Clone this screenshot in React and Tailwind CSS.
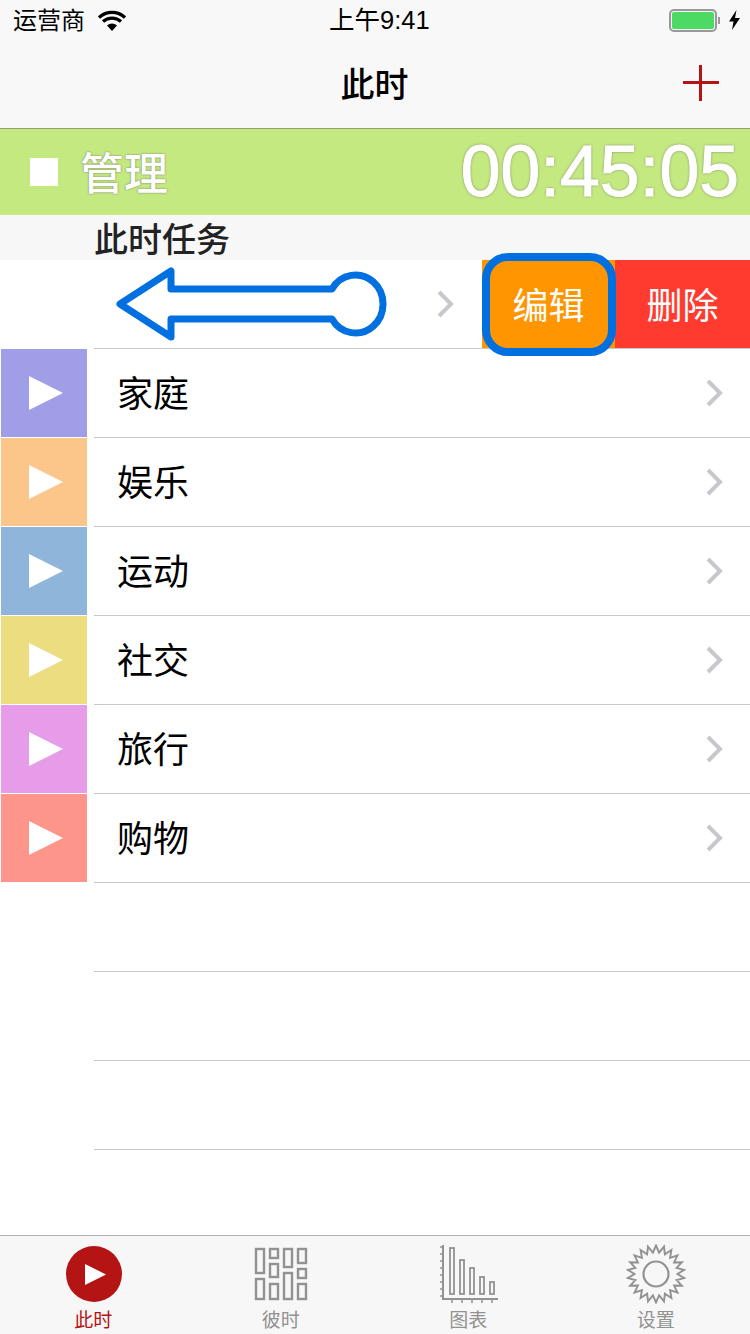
import React from 'react';

const cjk = "font-['Noto_Sans_CJK_SC',sans-serif]";

const tasks = [
  { name: '家庭', color: 'bg-[#a09ee6]' },
  { name: '娱乐', color: 'bg-[#fcc68a]' },
  { name: '运动', color: 'bg-[#8fb5da]' },
  { name: '社交', color: 'bg-[#ebdd80]' },
  { name: '旅行', color: 'bg-[#e69ce8]' },
  { name: '购物', color: 'bg-[#fe958b]' },
];

const Chevron = () => (
  <svg width="18" height="28" viewBox="0 0 18 28" fill="none">
    <path d="M3 2l12 12L3 26" stroke="#c7c7cc" strokeWidth="4" />
  </svg>
);

const StatusBar = () => (
  <div className="relative h-10 flex items-center justify-between pl-[13px] pr-[10px]">
    <div className="flex items-center gap-[13px]">
      <span className={`${cjk} text-[24px] leading-none text-black mb-[3px]`}>运营商</span>
      <svg width="28" height="21" viewBox="0 0 28 21">
        <path d="M14 21L9 15.500a7.500 7.500 0 0 1 10 0z" fill="#000" />
        <path d="M1 7.500a19 19 0 0 1 26 0M5 11.500a13.500 13.500 0 0 1 18 0" stroke="#000" strokeWidth="3.200" fill="none" />
      </svg>
    </div>
    <span className="absolute left-[329px] top-[5px] text-[25.5px] leading-[30px] text-black font-['Liberation_Sans','Noto_Sans_CJK_SC',sans-serif]">上午9:41</span>
    <div className="flex items-center gap-[9px]">
      <div className="flex items-center gap-px">
        <div className="w-[48px] h-[23px] rounded-[5px] border-2 border-[#999] p-px">
          <div className="w-full h-full rounded-[2px] bg-[#4cd964]" />
        </div>
        <div className="w-[2px] h-[7px] bg-[#999]" />
      </div>
      <svg width="11" height="20" viewBox="0 0 11 20">
        <path d="M7.500 0L0 11.500h4.500L3 20l8-12H6z" fill="#000" />
      </svg>
    </div>
  </div>
);

const NavBar = () => (
  <div className="relative h-[88px] flex items-center justify-center">
    <span className={`${cjk} text-[34px] font-medium text-black leading-none mb-[2px] mr-[1px]`}>此时</span>
    <svg className="absolute left-[683px] top-[25px]" width="36" height="36" viewBox="0 0 36 36">
      <path d="M0 17.500h36M17.500 0v36" stroke="#b41414" strokeWidth="3" />
    </svg>
  </div>
);

const Running = () => (
  <div className="h-[87px] bg-[#c4e980] border-t border-[#8f9f78] flex items-center justify-between pl-[30px] pr-[11px]">
    <div className="flex items-center gap-[22px]">
      <div className="w-[28px] h-[28px] bg-white" />
      <span className={`${cjk} text-[44px] font-medium leading-none text-white mb-[2px] [text-shadow:0_0_2px_#6b6b6b]`}>管理</span>
    </div>
    <span className="font-['Liberation_Sans',sans-serif] text-[71.5px] leading-none text-white [-webkit-text-stroke:1px_white] [text-shadow:0_0_3px_#6b6b6b]">00:45:05</span>
  </div>
);

const SwipedRow = () => (
  <div className="relative h-[89px] bg-white">
    <div className="ml-[94px] h-full border-b border-[#c8c7cc] flex items-stretch justify-end">
      <div className="flex items-center mr-[28px]"><Chevron /></div>
      <div className={`${cjk} w-[133px] bg-[#ff9500] text-white text-[36px] pb-[3px] flex items-center justify-center`}>编辑</div>
      <div className={`${cjk} w-[135px] bg-[#ff3b30] text-white text-[36px] pb-[3px] flex items-center justify-center`}>删除</div>
    </div>
    {/* hint overlays */}
    <svg className="absolute left-[110px] top-0" width="285" height="89" viewBox="0 0 285 89" fill="none">
      <path
        d="M10 44L61 11v18h161a27.500 29 0 1 1 0 30H61v18z"
        stroke="#0070e0"
        strokeWidth="7"
        strokeLinejoin="round"
      />
    </svg>
    <div className="absolute left-[482px] top-[-7px] w-[134px] h-[103px] rounded-[26px] border-[8px] border-[#0070e0]" />
  </div>
);

const TaskRow = ({ name, color }) => (
  <div className="flex h-[89px]">
    <div className="w-[94px] pl-px shrink-0">
      <div className={`w-[86px] h-[88px] pl-[3px] flex items-center justify-center ${color}`}>
        <svg width="34" height="34" viewBox="0 0 34 34"><path d="M0 0l34 17L0 34z" fill="#fff" /></svg>
      </div>
    </div>
    <div className="flex-1 border-b border-[#c8c7cc] flex items-center justify-between pl-[23px] pr-[27px]">
      <span className={`${cjk} text-[36px] text-black leading-none mb-[4px]`}>{name}</span>
      <Chevron />
    </div>
  </div>
);

const EmptyRow = () => (
  <div className="ml-[94px] h-[89px] border-b border-[#c8c7cc]" />
);

const Grid = () => {
  const cells = [
    [256, 1249, 8, 24], [256, 1279, 8, 20],
    [270, 1249, 8, 9], [270, 1264, 8, 13], [270, 1284, 8, 15],
    [284, 1249, 8, 18], [284, 1273, 8, 26],
    [298, 1249, 8, 14], [298, 1269, 8, 9], [298, 1284, 8, 15],
  ];
  return (
    <svg width="54" height="54" viewBox="254 1247 54 54" fill="none">
      {cells.map(([x, y, w, h]) => (
        <rect key={`${x}-${y}`} x={x} y={y} width={w} height={h} stroke="#929292" strokeWidth="2.400" />
      ))}
    </svg>
  );
};

const Chart = () => {
  const bars = [[450, 1248], [460, 1260], [470, 1268], [480, 1277], [490, 1282]];
  const ticksY = [1247, 1254, 1261, 1268, 1275, 1282, 1289, 1296];
  return (
    <svg width="60" height="60" viewBox="439 1244 60 60" fill="none" stroke="#929292">
      <path d="M443 1245v54h55" strokeWidth="2" />
      {ticksY.map((y) => <path key={y} d={`M440 ${y}h3`} strokeWidth="1.500" />)}
      {bars.map(([x, y]) => (
        <g key={x}>
          <rect x={x} y={y} width="4" height={1294 - y} strokeWidth="1.800" />
          <path d={`M${x + 2} 1300v3`} strokeWidth="1.500" />
        </g>
      ))}
    </svg>
  );
};

const Gear = () => {
  const n = 22;
  const pts = [];
  for (let i = 0; i < n * 2; i++) {
    const r = i % 2 === 0 ? 28.500 : 21.500;
    const a = (i * Math.PI) / n - Math.PI / 2;
    pts.push(`${(30 + r * Math.cos(a)).toFixed(1)},${(30 + r * Math.sin(a)).toFixed(1)}`);
  }
  return (
    <svg width="60" height="60" viewBox="0 0 60 60" fill="none" stroke="#929292" strokeWidth="1.900">
      <polygon points={pts.join(' ')} />
      <circle cx="30" cy="30" r="12.500" strokeWidth="2.200" />
    </svg>
  );
};

const TabItem = ({ label, active, children, className }) => (
  <div className={`w-[188px] flex flex-col items-center ${className}`}>
    <div className="h-[60px] flex items-center justify-center">{children}</div>
    <span className={`${cjk} text-[19px] leading-[24px] mt-[3px] -ml-[1px] ${active ? 'text-[#b41414]' : 'text-[#929292]'}`}>{label}</span>
  </div>
);

const TabBar = () => (
  <div className="h-[99px] bg-[#f7f7f7] border-t border-[#b2b2b2] flex pt-[8px]">
    <TabItem label="此时" active className="w-[187px]">
      <div className="w-[56px] h-[56px] rounded-full bg-[#b41414] flex items-center justify-center pl-[3px]">
        <svg width="21" height="21" viewBox="0 0 21 21"><path d="M0 0l21 10.500L0 21z" fill="#fff" /></svg>
      </div>
    </TabItem>
    <TabItem label="彼时"><Grid /></TabItem>
    <TabItem label="图表"><Chart /></TabItem>
    <TabItem label="设置"><Gear /></TabItem>
  </div>
);

export default function App() {
  return (
    <div className="w-[750px] h-[1334px] bg-white overflow-hidden flex flex-col">
      <div className="bg-[#f8f8f8]">
        <StatusBar />
        <NavBar />
      </div>
      <Running />
      <div className={`${cjk} h-[45px] bg-[#f7f7f7] pl-[94px] text-[34px] font-medium leading-[45px] text-[#222]`}>此时任务</div>
      <SwipedRow />
      {tasks.map((t) => <TaskRow key={t.name} name={t.name} color={t.color} />)}
      <EmptyRow />
      <EmptyRow />
      <EmptyRow />
      <div className="flex-1" />
      <TabBar />
    </div>
  );
}
